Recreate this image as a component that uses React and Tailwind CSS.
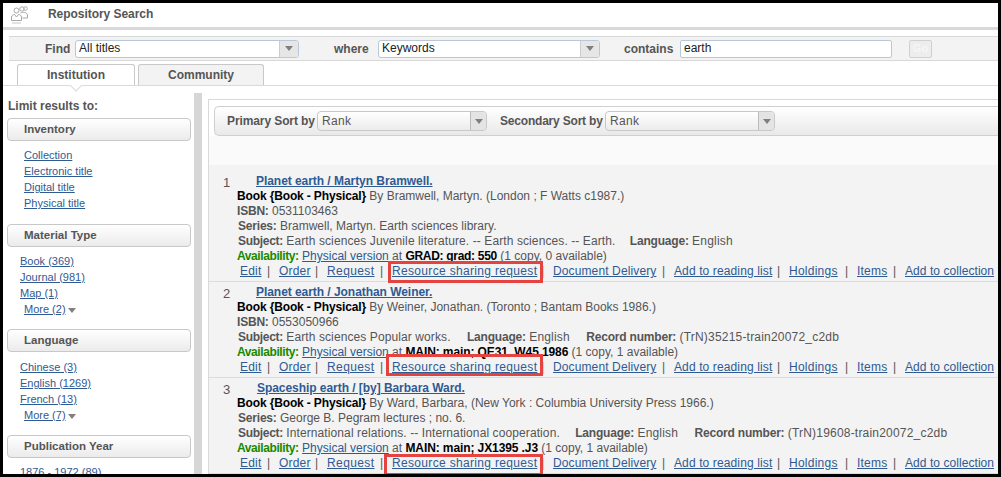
import React from "react";

const facets = [
  {
    title: "Inventory",
    indent: true,
    pad: "pt-[6px]",
    gap: "mb-[13px]",
    links: ["Collection", "Electronic title", "Digital title", "Physical title"],
  },
  { title: "Material Type", pad: "pt-[6px]", gap: "mb-[12px]", links: ["Book (369)", "Journal (981)", "Map (1)"], more: "More (2)" },
  { title: "Language", pad: "pt-[7px]", gap: "mb-[12px]", links: ["Chinese (3)", "English (1269)", "French (13)"], more: "More (7)" },
  { title: "Publication Year", pad: "pt-[6px]", gap: "mb-[12px]", links: ["1876 - 1972 (89)"] },
];

const Label = ({ children, className }) => (
  <b className={`tracking-[-0.2px] ${className || ""}`}>{children}</b>
);
const Value = ({ children }) => <span className="tracking-[0.1px]">{children}</span>;
const Record = ({ children }) => <span className="tracking-[0.2px]">{children}</span>;

const results = [
  {
    n: 1,
    pad: "mt-[6px] pt-[2px] pb-[2px]",
    box: "-left-[4px] -top-[3px] w-[155px]",
    atClass: "tracking-[-0.3px]",
    title: "Planet earth / Martyn Bramwell.",
    by: "By Bramwell, Martyn. (London ; F Watts c1987.)",
    lines: [
      <span key="a"><Label>ISBN:</Label> 0531103463</span>,
      <span key="b" className="ml-px"><Label>Series:</Label> Bramwell, Martyn. Earth sciences library.</span>,
      <span key="c" className="ml-px"><b className="tracking-[-0.3px]">Subject:</b> <Value>Earth sciences Juvenile literature. -- Earth sciences. -- Earth.</Value> <Label className="ml-[11px]">Language:</Label> <Record>English</Record></span>,
    ],
    at: "GRAD: grad: 550",
    copies: "(1 copy, 0 available)",
  },
  {
    n: 2,
    pad: "pt-[2px] pb-[2px]",
    box: "-left-[6px] -top-[6px] w-[157px]",
    atClass: "tracking-[-0.1px]",
    title: "Planet earth / Jonathan Weiner.",
    by: "By Weiner, Jonathan. (Toronto ; Bantam Books 1986.)",
    lines: [
      <span key="a"><Label>ISBN:</Label> 0553050966</span>,
      <span key="b" className="ml-px"><b className="tracking-[-0.3px]">Subject:</b> <Value>Earth sciences Popular works.</Value> <Label className="ml-[13px]">Language:</Label> <Record>English</Record> <Label className="ml-[13px]">Record number:</Label> <Record>(TrN)35215-train20072_c2db</Record></span>,
    ],
    at: "MAIN: main; QE31 .W45 1986",
    copies: "(1 copy, 1 available)",
  },
  {
    n: 3,
    pad: "pt-[2px] pb-[2px]",
    box: "-left-[8px] -top-[2px] w-[159px]",
    atClass: "tracking-[-0.1px]",
    title: "Spaceship earth / [by] Barbara Ward.",
    titleClass: "ml-px",
    by: "By Ward, Barbara, (New York : Columbia University Press 1966.)",
    lines: [
      <span key="a" className="ml-px"><Label>Series:</Label> George B. Pegram lectures ; no. 6.</span>,
      <span key="b" className="ml-px"><b className="tracking-[-0.3px]">Subject:</b> <Value>International relations. -- International cooperation.</Value> <Label className="ml-3">Language:</Label> <Record>English</Record> <Label className="ml-[13px]">Record number:</Label> <Record>(TrN)19608-train20072_c2db</Record></span>,
    ],
    at: "MAIN: main; JX1395 .J3",
    copies: "(1 copy, 1 available)",
  },
];

const actions = [
  ["Edit", "w-[39px]", "tracking-[0.2px]"],
  ["Order", "w-[48px]", "tracking-[0.2px]"],
  ["Request", "w-[65px]", "tracking-[0.4px]"],
  ["Resource sharing request", "w-[161px]", "tracking-[0.33px]"],
  ["Document Delivery", "w-[121px]", "tracking-[0.12px]"],
  ["Add to reading list", "w-[115px]", "tracking-[0.12px]"],
  ["Holdings", "w-[68px]", "tracking-[0.25px]"],
  ["Items", "w-[48px]", "tracking-[0.2px]"],
  ["Add to collection", "", "tracking-[0.06px]"],
];

function Arrow({ className }) {
  return <span className={`inline-block w-0 h-0 border-x-[4px] border-x-transparent border-t-[5px] border-t-[#808080] ${className || ""}`} />;
}

function Select({ value, width }) {
  return (
    <div className={`flex h-[18px] rounded-[3px] border border-[#b9c8d8] bg-white ${width}`}>
      <div className="flex-1 pl-[3px] leading-[15px] text-[#222]">{value}</div>
      <div className="flex w-[19px] items-center justify-center rounded-r-[3px] border-l border-[#ccc] bg-[#e6e6e6]">
        <Arrow />
      </div>
    </div>
  );
}

function SortSelect({ width }) {
  return (
    <div className={`flex h-[20px] rounded-[4px] border border-[#c8c8c8] bg-gradient-to-b from-white to-[#ececec] ${width}`}>
      <div className="flex-1 pl-[4px] leading-[19px] text-[#555] tracking-[0.3px]">Rank</div>
      <div className="flex w-[16px] items-center justify-center rounded-r-[4px] border-l border-[#bbb] bg-[#e4e4e4]">
        <Arrow />
      </div>
    </div>
  );
}

function Result({ r }) {
  return (
    <div className={`border-b border-[#dcdcdc] pl-[14px] text-[12px] leading-[15px] text-[#555] ${r.pad}`}>
      <div className="flex h-[16px]">
        <span className="w-[33px] pt-[2px] text-[13px] leading-[15px]">{r.n}</span>
        <a className={`pt-px font-bold tracking-[-0.05px] text-[#2f5a92] underline ${r.titleClass || ""}`}>{r.title}</a>
      </div>
      <div className="pl-[14px]">
        <div className="whitespace-nowrap"><b className="tracking-[-0.14px] text-black">Book &#123;Book - Physical&#125;</b> {r.by}</div>
        {r.lines.map((l, i) => <div key={i} className="whitespace-nowrap">{l}</div>)}
        <div className="whitespace-nowrap">
          <b className="tracking-[-0.4px] text-[#178a00]">Availability:</b> <a className="text-[#2f5a92] underline">Physical version</a> at <b className={`text-black ${r.atClass}`}>{r.at}</b> {r.copies}
        </div>
        <div className="flex whitespace-nowrap pl-[3px] text-[#2f5a92]">
          {actions.map(([label, w, spacing]) => (
            <div key={label} className={`relative shrink-0 ${w}`}>
              <a className={`underline ${spacing}`}>{label}</a>
              {w && <span className="absolute right-[9px] top-0 text-[#555]">|</span>}
              {label === "Resource sharing request" && (
                <span className={`absolute h-[22px] border-[3px] border-[#e5433f] ${r.box}`} />
              )}
            </div>
          ))}
        </div>
      </div>
    </div>
  );
}

export default function App() {
  return (
    <div className="h-[477px] w-[1001px] overflow-hidden border-x-[3px] border-t-[3px] border-b-[3px] border-black bg-white font-['Liberation_Sans',Arial,sans-serif] text-[12px] text-[#555]">
      {/* Header */}
      <div className="flex h-[24px] items-center">
        <svg className="ml-[7px] h-[21px] w-[19px]" viewBox="0 0 19 21" fill="none" stroke="#a8a8a8" strokeWidth="1">
          <circle cx="6.5" cy="5.5" r="2.5" />
          <circle cx="12" cy="4" r="2.2" />
          <circle cx="15.5" cy="3.5" r="1.8" />
          <path d="M1.5 15.5v-3.5c0-1.5 2-2.5 3-2.5l2 2.5 2-2.5c1.5 0 3 1 3 2.5v3.5z" />
          <path d="M10.5 8c2.5-1 6.5-1 7 2v3h-5" />
          <path d="M2 18h9" stroke="#e2e2e2" strokeWidth="2" />
        </svg>
        <span className="ml-[19px] pb-[3px] font-bold tracking-[-0.05px] text-[#555]">Repository Search</span>
      </div>
      <div className="h-[3px] bg-[#d9d9d9]" />

      {/* Search bar */}
      <div className="ml-[6px] mt-[6px] flex h-[25px] items-center border-y border-[#d8d8d8] bg-[#f3f3f3] text-[12px]">
        <span className="ml-[36px] w-[30px] font-bold">Find</span>
        <Select value="All titles" width="w-[224px]" />
        <span className="ml-[35px] w-[44px] font-bold">where</span>
        <Select value="Keywords" width="w-[222px]" />
        <span className="ml-[24px] w-[56px] font-bold">contains</span>
        <div className="h-[18px] w-[212px] rounded-[2px] border border-[#b9c8d8] bg-white pl-[3px] leading-[15px] text-[#222]">earth</div>
        <div className="ml-[17px] flex h-[18px] w-[23px] items-center justify-center rounded-[2px] border border-[#d0d0d0] bg-[#ededed] text-[11px] font-bold text-[#f6f6f6]">Go</div>
      </div>

      {/* Tabs */}
      <div className="flex h-[25px] items-end gap-[3px] border-b border-[#d6dbe2] pl-[14px]">
        <div className="relative h-[21px] w-[118px] rounded-t-[3px] border border-b-0 border-[#c8c8c8] bg-white text-center font-bold leading-[20px]">
          Institution
          <span className="absolute -bottom-[5px] left-1/2 h-[8px] w-[8px] -translate-x-1/2 rotate-45 border-b border-r border-[#d6dbe2] bg-white" />
        </div>
        <div className="h-[21px] w-[126px] rounded-t-[3px] border border-b-0 border-[#c8c8c8] bg-[#f3f3f3] text-center font-bold leading-[20px]">Community</div>
      </div>

      <div className="flex">
        {/* Facets */}
        <div className="w-[191px] shrink-0 pt-[12px]">
          <div className="pl-[5px] font-bold leading-[16px]">Limit results to:</div>
          <div className="pt-[4px] pl-[4px]">
            {facets.map((f) => (
              <div key={f.title} className={f.gap}>
                <div className="h-[23px] w-[184px] rounded-[4px] border border-[#c8c8c8] bg-gradient-to-b from-white to-[#ebebeb] pl-[16px] font-bold text-[11.5px] leading-[21px]">{f.title}</div>
                <div className={`text-[11px] leading-[16px] text-[#2f5a92] ${f.pad}`}>
                  {f.links.map((l) => (
                    <div key={l} className={f.indent ? "pl-[17px]" : "pl-[13px]"}><a className="underline">{l}</a></div>
                  ))}
                  {f.more && (
                    <div className="pl-[17px]">
                      <a className="underline">{f.more}</a>
                      <Arrow className="ml-[2px] align-middle" />
                    </div>
                  )}
                </div>
              </div>
            ))}
          </div>
        </div>
        <div className="mt-[7px] h-[400px] w-[8px] shrink-0 bg-[#d6d6d6]" />

        {/* Results */}
        <div className="ml-[6px] mt-[13px] h-[400px] min-w-0 flex-1 border-l border-t border-[#d9d9d9] bg-[#f3f3f3]">
          <div className="h-[65px] bg-[#fafafa]">
            <div className="bg-white pl-[5px] pt-[6px]">
              <div className="flex h-[30px] items-center rounded-l-[5px] border-y border-l border-[#cfcfcf] bg-gradient-to-b from-white to-[#e9e9e9] whitespace-nowrap">
                <span className="ml-[12px] w-[90px] font-bold tracking-[-0.1px]">Primary Sort by</span>
                <SortSelect width="w-[170px]" />
                <span className="ml-[13px] w-[105px] font-bold tracking-[-0.2px]">Secondary Sort by</span>
                <SortSelect width="w-[170px]" />
              </div>
            </div>
          </div>
          <div>
            {results.map((r) => <Result key={r.n} r={r} />)}
          </div>
        </div>
      </div>
    </div>
  );
}
